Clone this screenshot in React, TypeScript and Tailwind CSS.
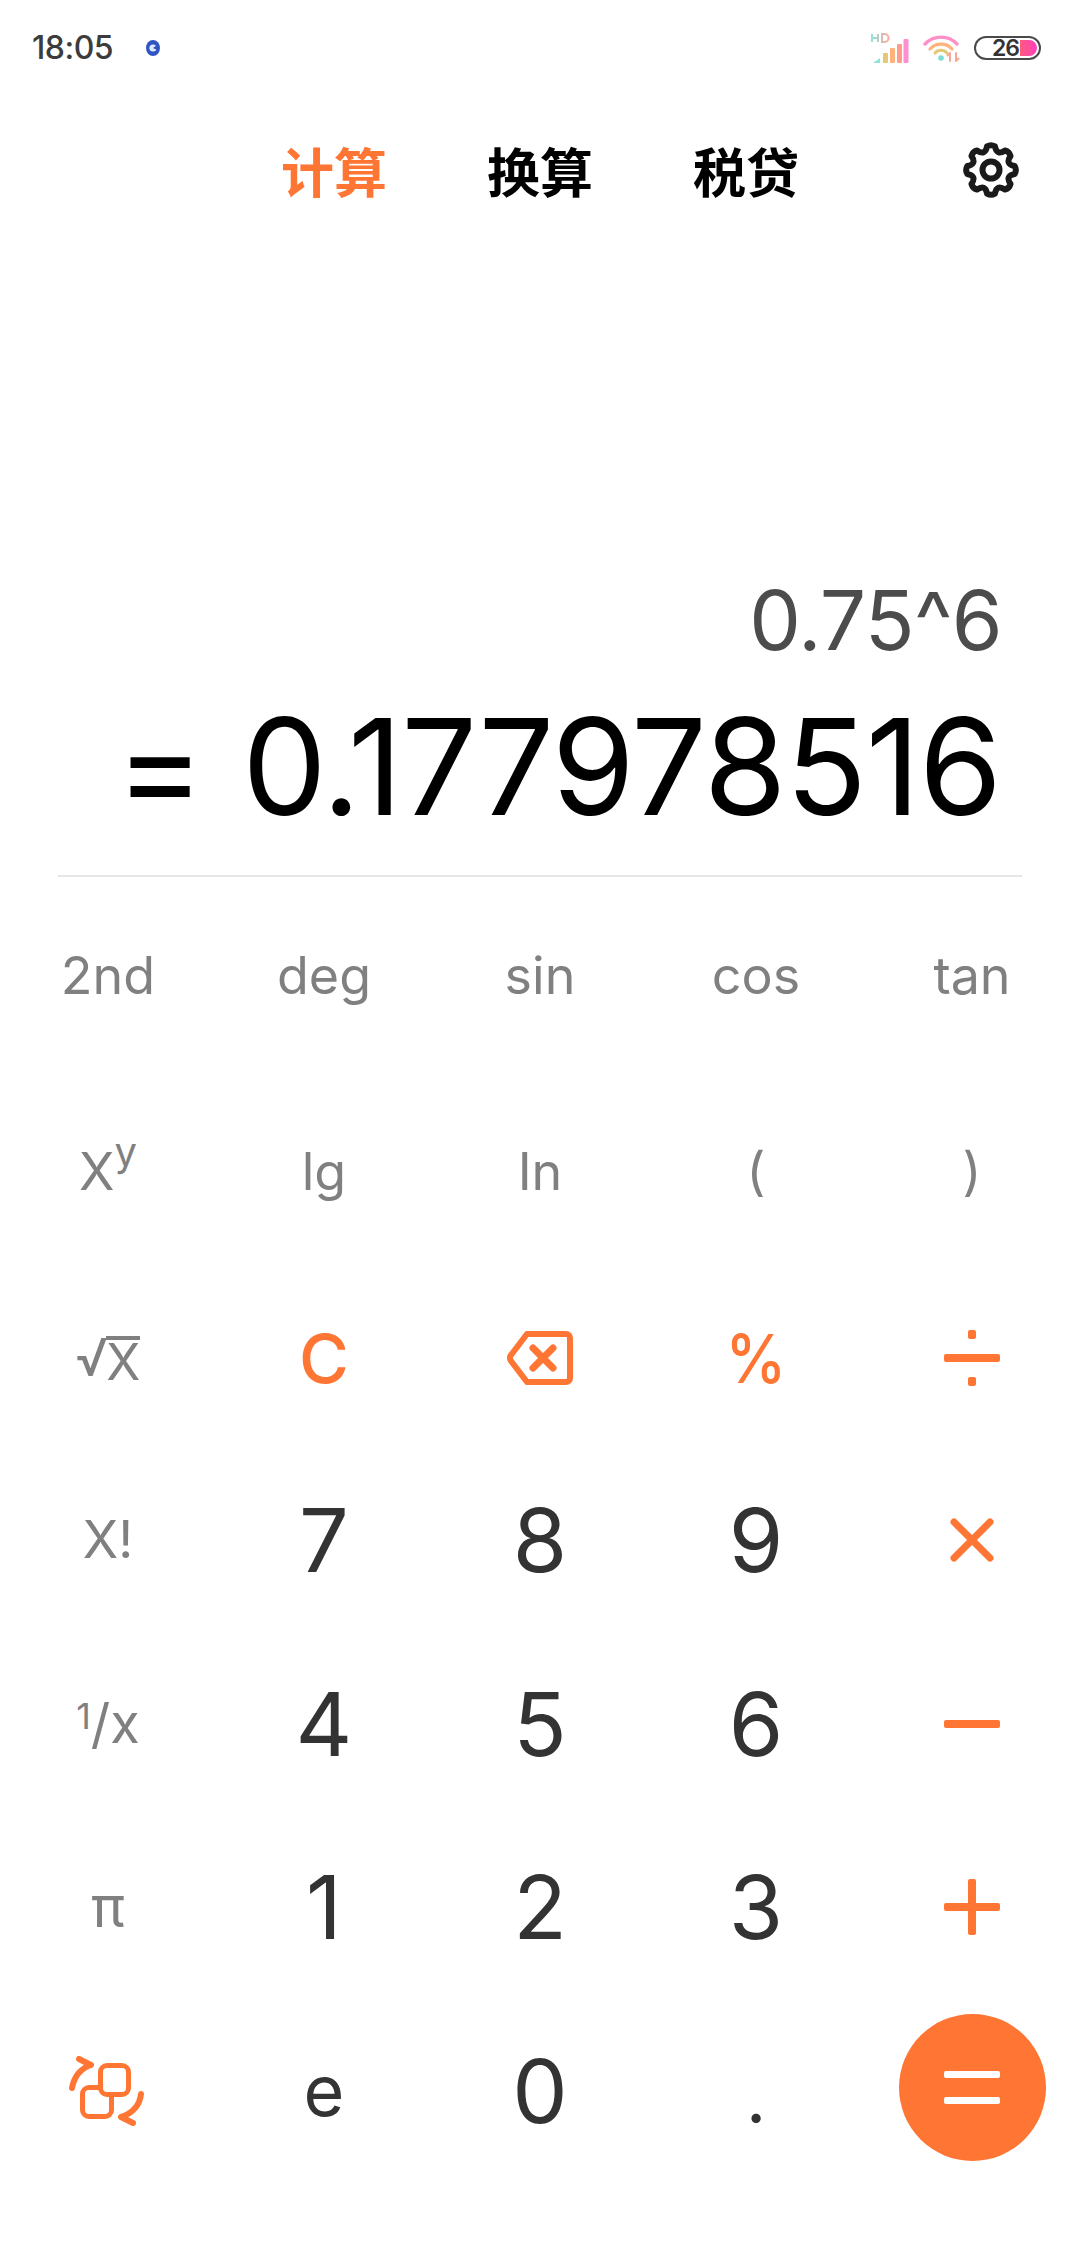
import React from 'react';

const gearPath = (() => {
  // cog outline with 8 rounded teeth
  const teeth = 8;
  const pts: string[] = [];
  const p = (r: number, t: number) => `${(28 + r * Math.cos(t)).toFixed(2)} ${(28 + r * Math.sin(t)).toFixed(2)}`;
  for (let i = 0; i < teeth; i++) {
    const a = (i / teeth) * Math.PI * 2 - Math.PI / 2;
    const step = Math.PI / teeth;
    if (i === 0) pts.push(`M${p(24, a - step * 0.42)}`);
    pts.push(`Q${p(26, a)} ${p(24, a + step * 0.42)}`);
    pts.push(`Q${p(15, a + step)} ${p(24, a + step * 1.58)}`);
  }
  return pts.join(' ') + 'Z';
})();

const Gear = () => (
  <svg width="56" height="56" viewBox="0 0 56 56" fill="none" stroke="#1a1a1a" strokeWidth="6" strokeLinejoin="round">
    <path d={gearPath} />
    <circle cx="28" cy="28" r="8.5" />
  </svg>
);

const StatusBar = () => (
  <div className="h-[94px] flex items-center pl-[32px] pr-[39px] pt-[2px]">
    <span className="text-[32px] text-[#3c3c3c] font-medium font-['Inter',sans-serif] tracking-[-0.5px]">18:05</span>
    <svg className="ml-[32px]" width="16" height="18" viewBox="0 0 16 18">
      <ellipse cx="8" cy="9" rx="7" ry="8" fill="#2f55c4" />
      <circle cx="8" cy="9" r="3.6" fill="#dfe8ff" />
      <path d="M8 9l4-3v5z" fill="#2f55c4" />
    </svg>
    <div className="ml-auto flex items-center">
      <svg width="40" height="32" viewBox="0 0 40 32">
        <defs>
          <linearGradient id="hd" x1="0" x2="1" y1="0" y2="0">
            <stop offset="0" stopColor="#8fe3dc" />
            <stop offset="1" stopColor="#ffa9a0" />
          </linearGradient>
        </defs>
        <path d="M2 2v8M8 2v8M2 6h6M12 2v8h2.500a4 4 0 0 0 0-8z" stroke="url(#hd)" strokeWidth="2" fill="none" />
        <path d="M3 31l7-5v5z" fill="#8fe3dc" />
        <rect x="13" y="21" width="5" height="10" rx="1" fill="#e3c878" />
        <rect x="20" y="16" width="5" height="15" rx="1" fill="#ffb37a" />
        <rect x="27" y="12" width="5" height="19" rx="1" fill="#ff9c8c" />
        <rect x="33.500" y="7" width="5" height="24" rx="1" fill="#ff8fd0" />
      </svg>
      <svg className="ml-[13px]" width="38" height="28" viewBox="0 0 38 28" fill="none" strokeLinecap="round">
        <path d="M2 10a22 22 0 0 1 32 0" stroke="#ff8fc8" strokeWidth="3.400" />
        <path d="M7 15a15 15 0 0 1 22 0" stroke="#ffb37a" strokeWidth="3.200" />
        <path d="M12 19a8 8 0 0 1 12 0" stroke="#e3c878" strokeWidth="3" />
        <circle cx="18" cy="24" r="2.800" fill="#7fdcd4" />
        <path d="M27 27v-8M24.500 21.500l2.500-2.500M33 19v8M35.500 24.500l-2.500 2.500" stroke="#f5a896" strokeWidth="2" />
      </svg>
      <div className="ml-[13px] w-[67px] h-[24px] rounded-full border-2 border-[#4a4a4a] flex items-center justify-end pr-[2px]">
        <span className="text-[23px] leading-none font-semibold text-[#333] font-['Inter',sans-serif] tracking-[-1px] mr-[1px]">26</span>
        <div className="w-[17px] h-[16px] rounded-r-full bg-[linear-gradient(90deg,#ff5a7a,#ff3fc0)]" />
      </div>
    </div>
  </div>
);

const Tabs = () => (
  <div className="relative h-[152px] flex justify-center items-start pt-[46px] gap-[100px] font-['Noto_Sans_CJK_SC',sans-serif] text-[53px] leading-[60px] font-bold">
    <span className="text-[#ff7534]">计算</span>
    <span className="text-black">换算</span>
    <span className="text-black">税贷</span>
    <div className="absolute right-[61px] top-[48px]">
      <Gear />
    </div>
  </div>
);

const Display = () => (
  <div className="flex flex-col items-end h-[631px] justify-end font-['Inter',sans-serif] font-normal">
    <div className="text-[82px] leading-[94px] text-[#4c4c4c] pr-[78px] tracking-[-0.7px]">0.75^6</div>
    <div className="flex w-full justify-end items-center text-[134px] leading-[160px] text-black pr-[79px] pt-[18px] pb-[29px] tracking-[-1.2px]">
      <span className="mr-[39px]">=</span>
      <span>0.177978516</span>
    </div>
    <div className="self-center w-[964px] h-[2px] bg-[#e6e6e6]" />
  </div>
);

const Sci = ({ children }: { children: React.ReactNode }) => (
  <span className="text-[52px] text-[#808080] font-normal leading-none">{children}</span>
);
const Num = ({ children }: { children: React.ReactNode }) => (
  <span className="text-[88px] text-[#333333] font-normal leading-none">{children}</span>
);
const Orange = ({ children }: { children: React.ReactNode }) => (
  <span className="text-[68px] text-[#ff7534] font-medium leading-none">{children}</span>
);

const Op = ({ children }: { children: React.ReactNode }) => (
  <svg width="56" height="56" viewBox="0 0 56 56" fill="#ff7534">
    {children}
  </svg>
);

const Backspace = () => (
  <svg width="66" height="54" viewBox="0 0 66 54" fill="none" stroke="#ff7534" strokeWidth="6" strokeLinejoin="round" strokeLinecap="round">
    <path d="M20 3h39a4 4 0 0 1 4 4v40a4 4 0 0 1-4 4H20L4 30a5 5 0 0 1 0-6z" />
    <path d="M26 17l20 20M46 17L26 37" strokeWidth="7" />
  </svg>
);

const Swap = () => (
  <svg width="78" height="70" viewBox="0 0 78 70" fill="none" stroke="#ff7534" strokeWidth="5" strokeLinecap="round" strokeLinejoin="round">
    <rect x="31.500" y="9.500" width="28" height="29" rx="6.500" />
    <path d="M31.500 31.500H20a6.500 6.500 0 0 0-6.500 6.500V54a6.500 6.500 0 0 0 6.500 6.500H36a6.500 6.500 0 0 0 6.500-6.500V38.500" />
    <path d="M3 32Q6 15 21.500 9M10 3l12 6" strokeWidth="6" />
    <path d="M72 38Q70 55 52 61M52 61l12 6" strokeWidth="6" />
  </svg>
);

const Keypad = () => (
  <div className="grid grid-cols-5 grid-rows-[198px_194px_178px_186px_182px_184px_184px] place-items-center font-['Inter',sans-serif]">
    <Sci>2nd</Sci>
    <Sci>deg</Sci>
    <Sci>sin</Sci>
    <Sci>cos</Sci>
    <Sci>tan</Sci>

    <Sci>
      X<sup className="text-[40px] -top-[24px] leading-none">y</sup>
    </Sci>
    <Sci>lg</Sci>
    <Sci>In</Sci>
    <Sci>(</Sci>
    <Sci>)</Sci>

    <div className="flex items-end text-[#808080] font-normal text-[50px] leading-none">
      <span className="text-[52px] leading-none -mr-[2px]">√</span>
      <span className="border-t-4 border-[#808080] leading-[44px]">X</span>
    </div>
    <Orange>C</Orange>
    <Backspace />
    <span className="text-[68px] text-[#ff7534] font-medium leading-none scale-x-90">%</span>
    <Op>
      <rect x="0" y="24" width="56" height="8" rx="2" />
      <rect x="24" y="0" width="8" height="9" rx="2" />
      <rect x="24" y="47" width="8" height="9" rx="2" />
    </Op>

    <Sci>X!</Sci>
    <Num>7</Num>
    <Num>8</Num>
    <Num>9</Num>
    <Op>
      <path d="M10 10l36 36M46 10L10 46" stroke="#ff7534" strokeWidth="7" strokeLinecap="round" fill="none" />
    </Op>

    <Sci>
      <span className="text-[36px] align-[14px]">1</span>
      <span className="text-[54px]">/x</span>
    </Sci>
    <Num>4</Num>
    <Num>5</Num>
    <Num>6</Num>
    <Op>
      <rect x="0" y="24" width="56" height="8" rx="2" />
    </Op>

    <Sci>
      <span className="text-[56px]">π</span>
    </Sci>
    <Num>1</Num>
    <Num>2</Num>
    <Num>3</Num>
    <Op>
      <rect x="0" y="24" width="56" height="8" rx="2" />
      <rect x="24" y="0" width="8" height="56" rx="2" />
    </Op>

    <Swap />
    <span className="text-[#333333] text-[70px] font-normal leading-none">e</span>
    <Num>0</Num>
    <span className="text-[70px] text-[#333333] font-normal leading-none mt-[14px]">.</span>
    <div className="w-[147px] h-[147px] -mt-[8px] rounded-full bg-[#ff7534] flex items-center justify-center">
      <svg width="56" height="33" viewBox="0 0 56 33" fill="#ffffff">
        <rect x="0" y="0" width="56" height="7" rx="2" />
        <rect x="0" y="26" width="56" height="7" rx="2" />
      </svg>
    </div>
  </div>
);

export default function App() {
  return (
    <div className="w-[1080px] h-[2248px] bg-white overflow-hidden">
      <StatusBar />
      <Tabs />
      <Display />
      <Keypad />
    </div>
  );
}
